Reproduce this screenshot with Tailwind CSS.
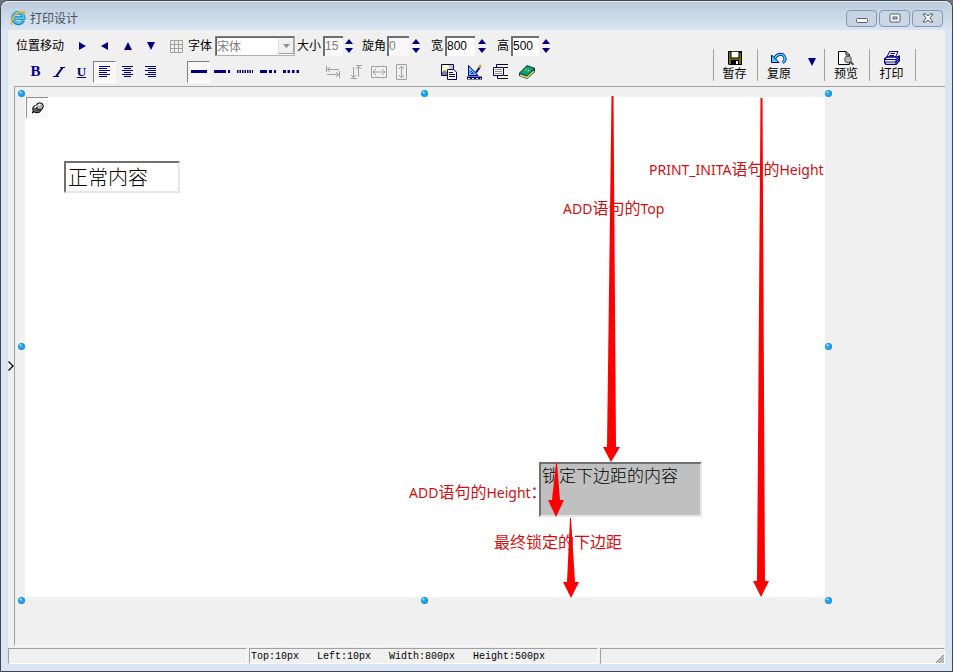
<!DOCTYPE html>
<html lang="zh-CN">
<head>
<meta charset="utf-8">
<title>打印设计</title>
<script src="https://cdn.jsdelivr.net/npm/@tailwindcss/browser@4"></script>
</head>
<body class="bg-[#6b7480] font-['Liberation_Sans','Noto_Sans_CJK_SC',sans-serif] text-xs text-black">
<svg class="absolute size-0">
  <defs>
    <symbol id="handle" viewBox="0 0 7 7"><circle cx="3.5" cy="3.5" r="3.500" fill="#0f8fe0"/><circle cx="3.200" cy="3.200" r="2.500" fill="#25a8f4"/><circle cx="2.500" cy="2.300" r="1" fill="#b8ecff"/></symbol>
    <symbol id="spin" viewBox="0 0 8 14"><path d="M4 0L8 5H0zM0 9H8L4 14z" fill="#000080"/></symbol>
  </defs>
</svg>
<div class="flex h-screen w-full flex-col rounded-t-lg border border-[#44444e] bg-[#d9e5f2] px-[7px] pb-[7px]">
  <header class="-mx-[7px] flex h-[29px] shrink-0 items-center rounded-t-lg border-t border-[#e4ecf5] bg-linear-to-b from-[#bccbdc] to-[#d9e5f2] pt-2 pr-[9px] pb-1 pl-[9px]">
    <svg class="size-4" viewBox="0 0 16 16"><path d="M13.3 10.4A5.4 5.4 0 1 1 13.8 8H4.6" fill="none" stroke="#1583c8" stroke-width="3.4"/><path d="M13.1 10.4A5.3 5.3 0 1 1 13.8 8.1H4.8" fill="none" stroke="#5cc8f0" stroke-width="1.8"/><path d="M2.4 14.8C-.6 13 3 5.600 8 2.800C12 .6 15.500 .4 14.800 4" fill="none" stroke="#e8c020" stroke-width="1.500"/></svg>
    <h1 class="ml-1 flex-1 pt-0.5 text-[#46525f]">打印设计</h1>
    <div class="flex gap-0.5">
      <button aria-label="最小化" class="flex h-[17px] w-[31px] items-center justify-center rounded-sm border border-[#8798ae] bg-[#c6d4e4]"><svg class="h-3 w-3" viewBox="0 0 12 12"><rect x=".5" y="6.500" width="11" height="4" rx="1" fill="#fff" stroke="#555c68"/></svg></button>
      <button aria-label="最大化" class="flex h-[17px] w-[31px] items-center justify-center rounded-sm border border-[#8798ae] bg-[#c8d6e6]"><svg class="h-3 w-3" viewBox="0 0 12 12"><rect x="1" y="2" width="10" height="8" rx="1" fill="#fff" stroke="#555c68"/><rect x="4" y="5" width="4" height="2" fill="#c8d6e6" stroke="#555c68"/></svg></button>
      <button aria-label="关闭" class="flex h-[17px] w-[31px] items-center justify-center rounded-sm border border-[#8798ae] bg-[#c8d6e6]"><svg class="h-3 w-3" viewBox="0 0 12 12"><path d="M1 2H4L6 4L8 2H11L8 6L11 10H8L6 8L4 10H1L4 6z" fill="#fff" stroke="#555c68"/></svg></button>
    </div>
  </header>

  <main class="flex min-h-0 flex-1 flex-col bg-[#f0f0f0]">
    <div class="flex h-14 shrink-0 items-start justify-between pr-[29px]">
      <div class="flex flex-col pt-1">
        <div class="flex h-6 items-center pl-2">
          <span class="w-[54px] whitespace-nowrap">位置移动</span>
          <button aria-label="右移" class="flex h-[22px] w-[23px] items-center justify-center"><svg class="size-2" viewBox="0 0 8 8"><path d="M1 0L8 4L1 8z" fill="#000080"/></svg></button>
          <button aria-label="左移" class="flex h-[22px] w-[23px] items-center justify-center"><svg class="size-2" viewBox="0 0 8 8"><path d="M7 0L0 4L7 8z" fill="#000080"/></svg></button>
          <button aria-label="上移" class="flex h-[22px] w-[23px] items-center justify-center"><svg class="size-2" viewBox="0 0 8 8"><path d="M0 8L4 0L8 8z" fill="#000080"/></svg></button>
          <button aria-label="下移" class="flex h-[22px] w-[23px] items-center justify-center"><svg class="size-2" viewBox="0 0 8 8"><path d="M0 0H8L4 8z" fill="#000080"/></svg></button>
          <button aria-label="网格" class="ml-1 flex h-[22px] w-5 items-center justify-center"><svg class="h-[13px] w-[13px]" viewBox="0 0 13 13"><path d="M.5 .5H12.500V12.500H.5zM4.500 0V13M8.500 0V13M0 4.500H13M0 8.500H13" fill="none" stroke="#a0a0a0"/></svg></button>
          <label for="font" class="ml-0.5 w-[27px] whitespace-nowrap">字体</label>
          <div class="relative h-5 w-20 border border-[#808080] border-r-[#b0b0b0] border-b-[#b0b0b0] bg-white">
            <select id="font" class="h-full w-full appearance-none border-t border-l border-[#606060] bg-transparent text-xs leading-4 text-[#808080]"><option>宋体</option></select>
            <span class="pointer-events-none absolute top-px right-0 flex h-4 w-4 items-center justify-center border border-[#a0a0a0] border-t-white border-l-[#e0e0e0] bg-[#f0f0f0]"><svg class="h-1 w-[7px]" viewBox="0 0 7 4"><path d="M0 0H7L3.500 4z" fill="#909090"/></svg></span>
          </div>
          <label for="size" class="ml-0.5 w-[26px] whitespace-nowrap">大小</label>
          <input id="size" value="15" class="h-5 w-5 border-t-2 border-l-2 border-[#707070] bg-[#f8f8f8] pb-0.5 text-[#808080]">
          <button aria-label="调整大小" class="ml-0.5 h-[14px] w-2"><svg class="h-[14px] w-2" viewBox="0 0 8 14"><use href="#spin"/></svg></button>
          <label for="angle" class="ml-[9px] w-[25px] whitespace-nowrap">旋角</label>
          <input id="angle" value="0" class="h-5 w-[22px] border-t-2 border-l-2 border-[#707070] bg-[#f8f8f8] pb-0.5 text-[#808080]">
          <button aria-label="调整旋角" class="ml-[3px] h-[14px] w-2"><svg class="h-[14px] w-2" viewBox="0 0 8 14"><use href="#spin"/></svg></button>
          <label for="width" class="ml-[11px] w-[14px]">宽</label>
          <input id="width" value="800" class="h-5 w-[30px] border-t-2 border-l-2 border-[#707070] bg-white pb-0.5">
          <button aria-label="调整宽" class="ml-[3px] h-[14px] w-2"><svg class="h-[14px] w-2" viewBox="0 0 8 14"><use href="#spin"/></svg></button>
          <label for="height" class="ml-[11px] w-[14px]">高</label>
          <input id="height" value="500" class="h-5 w-7 border-t-2 border-l-2 border-[#707070] bg-white pb-0.5">
          <button aria-label="调整高" class="ml-[3px] h-[14px] w-2"><svg class="h-[14px] w-2" viewBox="0 0 8 14"><use href="#spin"/></svg></button>
        </div>
        <div class="flex h-[27px] items-center pl-4">
          <button class="h-[22px] w-[23px] font-['Liberation_Serif',serif] text-[15px] font-bold text-[#000080]">B</button>
          <button aria-label="斜体" class="flex h-[22px] w-[23px] items-center justify-center"><svg class="h-[10px] w-3" viewBox="0 0 12 10"><path d="M7 .5H12M0 9.500H6" stroke="#000080"/><path d="M10 0L3 9.500" stroke="#000080" stroke-width="2"/></svg></button>
          <button class="h-[22px] w-[23px] font-['Liberation_Serif',serif] text-[13px] font-bold text-[#000080] underline">U</button>
          <button aria-label="左对齐" aria-pressed="true" class="flex h-[22px] w-[23px] items-center justify-center border border-white border-t-[#808080] border-l-[#808080] bg-[#f8f8f8]"><svg class="h-[13px] w-3" viewBox="0 0 12 13"><path d="M0 1.500H11M0 3.500H8M0 5.500H11M0 7.500H8M0 9.500H11M0 11.500H8" stroke="#000080"/></svg></button>
          <button aria-label="居中" class="flex h-[22px] w-[23px] items-center justify-center"><svg class="h-[13px] w-3" viewBox="0 0 12 13"><path d="M0 1.500H11M2 3.500H9M0 5.500H11M2 7.500H9M0 9.500H11M2 11.500H9" stroke="#000080"/></svg></button>
          <button aria-label="右对齐" class="flex h-[22px] w-[23px] items-center justify-center"><svg class="h-[13px] w-3" viewBox="0 0 12 13"><path d="M0 1.500H11M3 3.500H11M0 5.500H11M3 7.500H11M0 9.500H11M3 11.500H11" stroke="#000080"/></svg></button>
          <button aria-label="实线" aria-pressed="true" class="ml-[25px] flex h-[22px] w-[23px] items-center justify-center border border-white border-t-[#808080] border-l-[#808080] bg-[#f8f8f8]"><svg class="h-[3px] w-4" viewBox="0 0 16 3"><path d="M0 1.500H16" stroke="#000080" stroke-width="3"/></svg></button>
          <button aria-label="点划线" class="flex h-[22px] w-[23px] items-center justify-center"><svg class="h-[3px] w-4" viewBox="0 0 16 3"><path d="M0 1.500H12M14 1.500H16" stroke="#000080" stroke-width="3"/></svg></button>
          <button aria-label="点线" class="flex h-[22px] w-[23px] items-center justify-center"><svg class="h-[3px] w-4" viewBox="0 0 16 3"><path d="M0 1.500H16" stroke="#000080" stroke-width="3" stroke-dasharray="1.500 1"/></svg></button>
          <button aria-label="双点划线" class="flex h-[22px] w-[23px] items-center justify-center"><svg class="h-[3px] w-4" viewBox="0 0 16 3"><path d="M0 1.500H7M9 1.500H12M14 1.500H16" stroke="#000080" stroke-width="3"/></svg></button>
          <button aria-label="虚线" class="flex h-[22px] w-[23px] items-center justify-center"><svg class="h-[3px] w-4" viewBox="0 0 16 3"><path d="M0 1.500H3M4.500 1.500H7M9 1.500H11.500M13.500 1.500H16" stroke="#000080" stroke-width="3"/></svg></button>
          <button aria-label="横向移动" class="ml-[19px] flex h-[22px] w-[23px] items-center justify-center"><svg class="h-3 w-4" viewBox="0 0 16 12"><path d="M1.500 0V6M1 3.500H14M5 1L2.500 3.500L5 6M14.500 5V12M2 8.500H14M11 6L13.500 8.500L11 11" fill="none" stroke="#a0a0a0"/></svg></button>
          <button aria-label="纵向移动" class="flex h-[22px] w-[23px] items-center justify-center"><svg class="h-4 w-3" viewBox="0 0 12 16"><path d="M6 1.500H12M8.500 2V13M6 5L8.500 2.500L11 5M1 14.500H7M3.500 3V14M1 11L3.500 13.500L6 11" fill="none" stroke="#a0a0a0"/></svg></button>
          <button aria-label="等宽" class="flex h-[22px] w-[23px] items-center justify-center"><svg class="h-3 w-4" viewBox="0 0 16 12"><path d="M.5 .5H15.500V11.500H.5zM2 6H14M5 3L2 6L5 9M11 3L14 6L11 9" fill="none" stroke="#a0a0a0"/></svg></button>
          <button aria-label="等高" class="flex h-[22px] w-[23px] items-center justify-center"><svg class="h-4 w-3" viewBox="0 0 12 16"><path d="M.5 .5H10.500V15.500H.5zM5.500 2V14M3 5L5.500 2L8 5M3 11L5.500 14L8 11" fill="none" stroke="#a0a0a0"/></svg></button>
          <button aria-label="图片" class="ml-[23px] flex h-[22px] w-[26px] items-center justify-center"><svg class="size-4" viewBox="0 0 16 16"><path d="M.5 .5H12.500V11.500H.5z" fill="#ffff98" stroke="#000060"/><path d="M1 11V8L4 6L7 9V11z" fill="#808080"/><path d="M7 1H12V5H9z" fill="#c8c8c8"/><circle cx="4" cy="4" r="2" fill="#fff"/><path d="M6.500 5.500H12.500L15.500 8V15.500H6.500z" fill="#fff" stroke="#000080"/><path d="M8 8.500H12M8 10.500H14M8 12.500H14" stroke="#000080"/></svg></button>
          <button aria-label="绘图" class="flex h-[22px] w-[26px] items-center justify-center"><svg class="size-4" viewBox="0 0 16 16"><path d="M1.500 1.500V11.500H11z" fill="#58c8ff" stroke="#000080"/><path d="M4 7V9.500H6.500z" fill="#fff" stroke="#000080" stroke-width=".7"/><path d="M0 12.500H15V15.500H0z" fill="#000080"/><path d="M1 14.500H3M5 14.500H7M9 14.500H11M13 14.500H14" stroke="#f0f0f0"/><path d="M9 8.500L13 3" stroke="#000080" stroke-width="2"/><path d="M12 3.500L14 1" stroke="#d0a050" stroke-width="2.500"/></svg></button>
          <button aria-label="页面结构" class="flex h-[22px] w-[26px] items-center justify-center"><svg class="size-4" viewBox="0 0 16 16"><path d="M3 .5H15V3.500H3zM4 11.500H15V14.500H4z" fill="#fff8c0"/><path d="M3.500 4V.5H15M11 3.500H15M4.500 11V14.500H15M11 11.500H15" fill="none" stroke="#000060"/><path d="M.5 3.500H10.500V11.500H.5z" fill="#fff" stroke="#000080"/><path d="M2 5.500H9M2 7.500H9M2 9.500H9" stroke="#909090"/></svg></button>
          <button aria-label="帮助" class="flex h-[22px] w-[26px] items-center justify-center"><svg class="size-4" viewBox="0 0 16 16"><path d="M0 9L8 1L16 4V8L8 15L0 12z" fill="#004048"/><path d="M1 11L8 13.500L15 7" fill="none" stroke="#f0e060" stroke-width="1.500"/><path d="M1 9L8 2L15 4.500L8 11.500z" fill="#10a070"/><path d="M6 6.500L8 5M9 7.500L10 5.500" stroke="#e8f060"/></svg></button>
        </div>
      </div>
      <div class="mt-[19px] flex h-8 border-x border-[#a0a0a0]">
        <button class="flex w-[43px] flex-col items-center gap-0.5 pt-0.5 pr-0.5 leading-[14px]"><svg class="size-[14px] shrink-0" viewBox="0 0 14 14"><path d="M0 0H14V14H1L0 13z"/><path d="M1 1H2.500V7.500H11.500V2H13V13H1z" fill="#707000"/><path d="M3.500 .8H10.500V6.500H3.500z" fill="#fff"/><path d="M3 9H11V13.500H3z"/><path d="M8 10H10V13H8z" fill="#fff"/></svg>暂存</button>
        <div class="flex w-[68px] border-x border-[#a0a0a0]">
          <button class="flex w-[42px] flex-col items-center gap-0.5 pt-0.5 leading-[14px]"><svg class="h-[14px] w-4 shrink-0" viewBox="0 0 16 14"><path d="M3.500 8C5 3 11 2 13 5C15 8 14 10 11.500 11.500" fill="none" stroke="#000080" stroke-width="3"/><path d="M3.500 8C5 3 11 2 13 5C15 8 14 10 11.500 11.500" fill="none" stroke="#40d8ff" stroke-width="1.600"/><path d="M.5 4V11.500H8z" fill="#40d8ff" stroke="#000080"/></svg>复原</button>
          <button aria-label="更多" class="flex flex-1 items-start justify-center pt-[9px]"><svg class="size-2" viewBox="0 0 8 8"><path d="M0 0H8L4 8z" fill="#000080"/></svg></button>
        </div>
        <button class="flex w-[44px] flex-col items-center gap-0.5 pt-0.5 pr-0.5 leading-[14px]"><svg class="h-[14px] w-4 shrink-0" viewBox="0 0 16 14"><path d="M.5 .5H8L11.500 4V13.500H.5z" fill="#fff" stroke="#000"/><path d="M8 .5V4H11.500" fill="none" stroke="#000"/><circle cx="10" cy="8.500" r="3.400" fill="#b0b8c0" stroke="#505050"/><path d="M12.500 11L15.500 13.800" stroke="#404040" stroke-width="2"/></svg>预览</button>
        <button class="flex w-[46px] flex-col items-center gap-0.5 border-l border-[#a0a0a0] pt-0.5 pr-0.5 leading-[14px]"><svg class="h-[14px] w-4 shrink-0" viewBox="0 0 16 14"><path d="M5.500 .5H14L11.500 6H3z" fill="#fff" stroke="#000080"/><path d="M6.500 2.500H11M5.500 4.500H10" stroke="#000080"/><path d="M3 6H12.500L15.500 5V9.500L12 13.500H2L.5 11.500V8z" fill="#fff" stroke="#000080" stroke-width="1.300"/><path d="M1 8.500H12L15 6M1 11H12L15 8M12 8V13" fill="none" stroke="#000080" stroke-width="1.200"/></svg>打印</button>
      </div>
    </div>

    <div class="flex min-h-0 flex-1">
      <button aria-label="展开侧栏" class="flex w-1.5 shrink-0 items-center justify-center"><svg class="h-[10px] w-[6px] shrink-0" viewBox="0 0 6 10"><path d="M.5 .5L5 5L.5 9.500" fill="none" stroke="#000" stroke-width="1.300"/></svg></button>
      <div class="relative min-w-0 flex-1 overflow-hidden border-t border-l border-b border-[#a0a0a0] border-b-white pt-2.5 pl-2.5">
        <div class="relative h-[500px] w-[800px] bg-white">
          <svg class="absolute -top-[7px] -left-[7px] size-[7px]"><use href="#handle"/></svg>
          <svg class="absolute -top-[7px] left-[396px] size-[7px]"><use href="#handle"/></svg>
          <svg class="absolute -top-[7px] left-[800px] size-[7px]"><use href="#handle"/></svg>
          <svg class="absolute top-[246px] -left-[7px] size-[7px]"><use href="#handle"/></svg>
          <svg class="absolute top-[246px] left-[800px] size-[7px]"><use href="#handle"/></svg>
          <svg class="absolute top-[500px] -left-[7px] size-[7px]"><use href="#handle"/></svg>
          <svg class="absolute top-[500px] left-[396px] size-[7px]"><use href="#handle"/></svg>
          <svg class="absolute top-[500px] left-[800px] size-[7px]"><use href="#handle"/></svg>
          <button aria-label="固定" class="absolute top-0 left-px flex h-[21px] w-[22px] items-center justify-center border-t border-l border-[#909090] bg-[#f8f8f8]"><svg class="size-3" viewBox="0 0 12 12"><path d="M0 11L3 8" stroke="#000" stroke-width="1.500"/><ellipse cx="5" cy="7" rx="4.200" ry="3.700" fill="#606060" stroke="#000"/><ellipse cx="7.800" cy="4.300" rx="3.500" ry="3.500" fill="#b0b0b0" stroke="#000"/><path d="M3 6C3 4.500 4 4 5 4M6.500 3.500C7 2.500 8 2.500 8.500 2.500" fill="none" stroke="#fff" stroke-width="1.300"/></svg></button>
          <div class="absolute top-16 left-[39px] flex h-8 w-[116px] items-center border-2 border-[#e8e8e8] border-t-[#707070] border-l-[#707070] bg-white pt-0.5 pl-0.5 text-xl leading-7 font-light">正常内容</div>
          <div class="absolute top-[365px] left-[514px] h-[55px] w-[163px] border-2 border-[#e8e8e8] border-t-[#707070] border-l-[#707070] bg-[#c0c0c0] pt-px pl-px text-[17px] leading-6 font-light">锁定下边距的内容</div>
          <div class="font-['Noto_Sans_CJK_SC',sans-serif] text-base leading-5 whitespace-nowrap text-[#d01010] [font-feature-settings:'halt']">
            <p class="absolute top-[61px] left-[624px]"><span class="font-['Noto_Sans',sans-serif] text-sm">PRINT_INITA</span>语句的<span class="font-['Noto_Sans',sans-serif] text-sm">Height</span></p>
            <p class="absolute top-[100px] left-[538px]"><span class="font-['Noto_Sans',sans-serif] text-sm">ADD</span>语句的<span class="font-['Noto_Sans',sans-serif] text-sm">Top</span></p>
            <p class="absolute top-[384px] left-[384px]"><span class="font-['Noto_Sans',sans-serif] text-sm">ADD</span>语句的<span class="font-['Noto_Sans',sans-serif] text-sm">Height</span>：</p>
            <p class="absolute top-[434px] left-[469px]">最终锁定的下边距</p>
          </div>
          <svg class="pointer-events-none absolute inset-0 overflow-visible" width="800" height="500" viewBox="0 0 800 500" fill="#f00">
            <path d="M586.500 -1H588.500L591 350H595L586 365L578 350H582z"/>
            <path d="M735.500 1H737.500L740 484H744L736 500L728 484H732z"/>
            <path d="M531 366H532L535 403H539L531 420L523 403H527z"/>
            <path d="M545 421H546L550 485H554L546 501L538 485H542z"/>
          </svg>
        </div>
      </div>
    </div>

    <footer class="mt-0.5 flex h-4 shrink-0 gap-0.5 font-['Liberation_Mono',monospace] text-[10px] leading-4">
      <div class="w-[239px] border border-white border-t-[#a0a0a0] border-l-[#a0a0a0]"></div>
      <div class="flex w-[349px] gap-[18px] border border-white border-t-[#a0a0a0] border-l-[#a0a0a0] pl-px whitespace-nowrap"><span>Top:10px</span><span>Left:10px</span><span>Width:800px</span><span>Height:500px</span></div>
      <div class="flex flex-1 items-end justify-end border border-white border-t-[#a0a0a0] border-l-[#a0a0a0]"><svg class="size-2" viewBox="0 0 8 8"><path d="M0 8L8 0M3 8L8 3M6 8L8 6" stroke="#909090" stroke-width="1.300"/></svg></div>
    </footer>
  </main>
</div>
</body>
</html>
